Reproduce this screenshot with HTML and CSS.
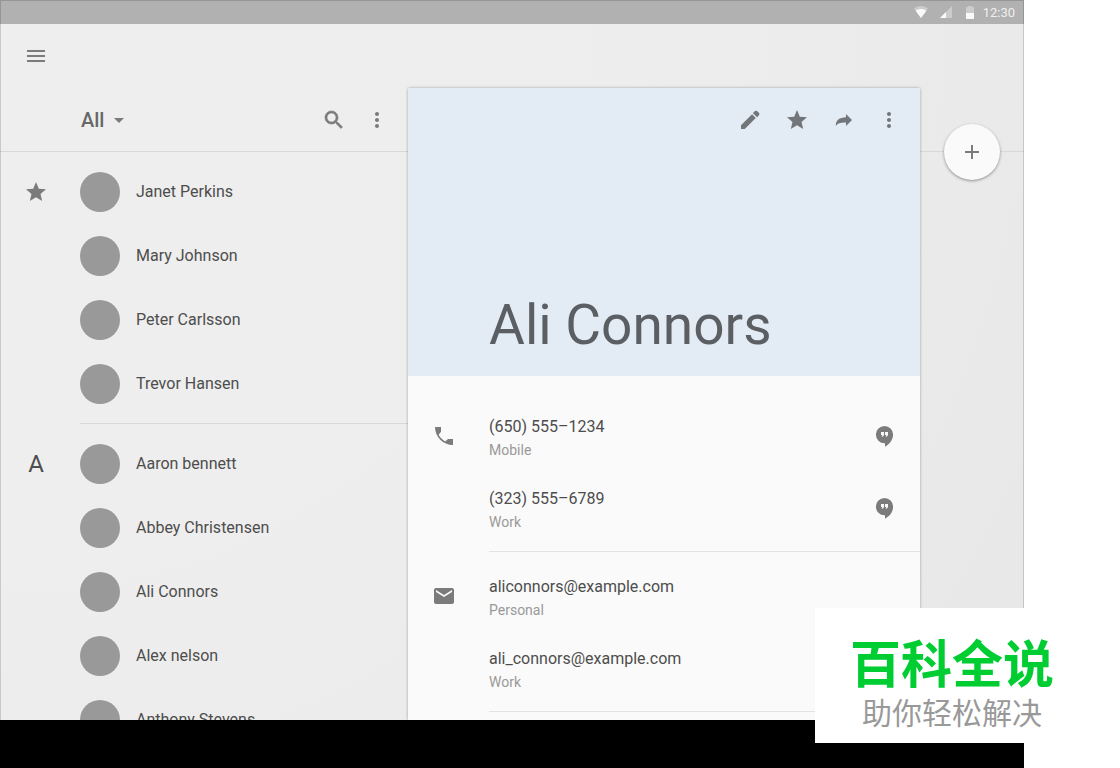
FILE: index.html
```html
<!DOCTYPE html>
<html lang="en">
<head>
    <meta charset="UTF-8">
    <meta name="viewport" content="width=device-width, initial-scale=1.0">
    <title>Contacts</title>
    <link rel="stylesheet" href="styles.css">
</head>
<body>
    <div class="tablet">
        <div class="status-bar">
            <svg class="status-icon" width="14" height="12" viewBox="0 0 14 12">
                <path d="M7 12L0 2.600C2 1 4.400 0 7 0s5 1 7 2.600z" fill="#fff" opacity="0.350"/>
                <path d="M7 12L1.600 4.700C3.200 3.600 5 3 7 3s3.800.6 5.400 1.700z" fill="#fafafa"/>
            </svg>
            <svg class="status-icon" width="12" height="12" viewBox="0 0 12 12">
                <path d="M0 12L12 0v12z" fill="#fff" opacity="0.350"/>
                <path d="M0 12l6-6v6z" fill="#fafafa"/>
            </svg>
            <svg class="status-icon" width="8" height="13" viewBox="0 0 8 13">
                <path d="M0 1h2V0h4v1h2v6H0z" fill="#fff" opacity="0.350"/>
                <path d="M0 7h8v6H0z" fill="#fafafa"/>
            </svg>
            <span class="time">12:30</span>
        </div>

        <div class="main">
            <header class="app-bar">
                <div class="app-row">
                    <button class="icon-button" aria-label="Menu">
                        <svg viewBox="0 0 24 24"><path d="M3 18h18v-2H3v2zm0-5h18v-2H3v2zm0-7v2h18V6H3z"/></svg>
                    </button>
                </div>
                <div class="app-row list-bar">
                    <div class="filter">
                        <select aria-label="Filter contacts">
                            <option>All</option>
                        </select>
                        <svg class="caret" viewBox="0 0 10 5"><path d="M0 0h10L5 5z"/></svg>
                    </div>
                    <button class="icon-button search" aria-label="Search">
                        <svg viewBox="0 0 24 24"><path d="M15.500 14h-.79l-.28-.27C15.410 12.590 16 11.110 16 9.500 16 5.910 13.090 3 9.500 3S3 5.910 3 9.500 5.910 16 9.500 16c1.610 0 3.090-.59 4.230-1.570l.27.28v.79l5 4.990L20.490 19l-4.990-5zm-6 0C7.010 14 5 11.990 5 9.500S7.010 5 9.500 5 14 7.010 14 9.500 11.990 14 9.500 14z"/></svg>
                    </button>
                    <button class="icon-button" aria-label="More">
                        <svg viewBox="0 0 24 24"><path d="M12 8c1.100 0 2-.9 2-2s-.9-2-2-2-2 .9-2 2 .9 2 2 2zm0 2c-1.100 0-2 .9-2 2s.9 2 2 2 2-.9 2-2-.9-2-2-2zm0 6c-1.100 0-2 .9-2 2s.9 2 2 2 2-.9 2-2-.9-2-2-2z"/></svg>
                    </button>
                </div>
            </header>

            <div class="contacts">
                <section class="group">
                    <div class="group-mark">
                        <svg class="icon" viewBox="0 0 24 24"><path d="M12 17.270L18.180 21l-1.640-7.030L22 9.240l-7.190-.61L12 2 9.190 8.630 2 9.240l5.460 4.730L5.820 21z"/></svg>
                    </div>
                    <ul class="people">
                        <li><a href="#"><span class="avatar"></span><span class="name">Janet Perkins</span></a></li>
                        <li><a href="#"><span class="avatar"></span><span class="name">Mary Johnson</span></a></li>
                        <li><a href="#"><span class="avatar"></span><span class="name">Peter Carlsson</span></a></li>
                        <li><a href="#"><span class="avatar"></span><span class="name">Trevor Hansen</span></a></li>
                    </ul>
                </section>
                <section class="group">
                    <div class="group-mark">A</div>
                    <ul class="people">
                        <li><a href="#"><span class="avatar"></span><span class="name">Aaron bennett</span></a></li>
                        <li><a href="#"><span class="avatar"></span><span class="name">Abbey Christensen</span></a></li>
                        <li><a href="#"><span class="avatar"></span><span class="name">Ali Connors</span></a></li>
                        <li><a href="#"><span class="avatar"></span><span class="name">Alex nelson</span></a></li>
                        <li><a href="#"><span class="avatar"></span><span class="name">Anthony Stevens</span></a></li>
                    </ul>
                </section>
            </div>

            <article class="card">
                <div class="card-header">
                    <div class="card-actions">
                        <button class="icon-button" aria-label="Edit">
                            <svg viewBox="0 0 24 24"><path d="M2 17.250V21h3.750L16.810 9.940l-3.750-3.750L2 17.250zM19.710 7.540c.9-.9.9-1.900.2-2.700l-1.700-1.700c-.8-.7-1.900-.6-2.700.2l-1.600 1.800 4.200 4.200z"/></svg>
                        </button>
                        <button class="icon-button" aria-label="Favorite">
                            <svg viewBox="0 0 24 24"><path d="M12 17.270L18.180 21l-1.640-7.030L22 9.240l-7.190-.61L12 2 9.190 8.630 2 9.240l5.460 4.730L5.820 21z"/></svg>
                        </button>
                        <button class="icon-button" aria-label="Share">
                            <svg viewBox="0 0 24 24"><path d="M15 9.300V6l6 6-6 6v-3.400c-5-.2-8.300.6-10.200 3.400C4.600 12.500 8.400 9.400 15 9.300z"/></svg>
                        </button>
                        <button class="icon-button" aria-label="More">
                            <svg viewBox="0 0 24 24"><path d="M12 8c1.100 0 2-.9 2-2s-.9-2-2-2-2 .9-2 2 .9 2 2 2zm0 2c-1.100 0-2 .9-2 2s.9 2 2 2 2-.9 2-2-.9-2-2-2zm0 6c-1.100 0-2 .9-2 2s.9 2 2 2 2-.9 2-2-.9-2-2-2z"/></svg>
                        </button>
                    </div>
                    <h1>Ali Connors</h1>
                </div>

                <div class="card-body">
                    <section class="details">
                        <div class="detail">
                            <svg class="icon" viewBox="0 0 24 24"><path d="M3 3h6v4.800L6.620 10.790c1.440 2.830 3.760 5.140 6.590 6.590L16 15h5v6c-9.900 0-18-8.100-18-18z"/></svg>
                            <div class="detail-text">
                                <p class="value">(650) 555–1234</p>
                                <p class="kind">Mobile</p>
                            </div>
                            <button class="icon-button" aria-label="Chat">
                                <svg viewBox="0 0 24 24"><path fill-rule="evenodd" d="M12.500 2a8.600 8.600 0 0 0 0 17.200h.5V22.700c4.400-2.200 8.100-6.700 8.100-12.100A8.600 8.600 0 0 0 12.500 2zM9 8h3v3l-1 1.600H9.500l.8-1.600H9zM13 8h3v3l-1 1.600h-1.500l.8-1.600H13z"/></svg>
                            </button>
                        </div>
                        <div class="detail">
                            <div class="detail-text">
                                <p class="value">(323) 555–6789</p>
                                <p class="kind">Work</p>
                            </div>
                            <button class="icon-button" aria-label="Chat">
                                <svg viewBox="0 0 24 24"><path fill-rule="evenodd" d="M12.500 2a8.600 8.600 0 0 0 0 17.200h.5V22.700c4.400-2.200 8.100-6.700 8.100-12.100A8.600 8.600 0 0 0 12.500 2zM9 8h3v3l-1 1.600H9.500l.8-1.600H9zM13 8h3v3l-1 1.600h-1.500l.8-1.600H13z"/></svg>
                            </button>
                        </div>
                    </section>
                    <section class="details">
                        <div class="detail">
                            <svg class="icon" viewBox="0 0 24 24"><path d="M20 4H4c-1.100 0-1.990.9-1.990 2L2 18c0 1.100.9 2 2 2h16c1.100 0 2-.9 2-2V6c0-1.100-.9-2-2-2zm0 4l-8 5-8-5V6l8 5 8-5v2z"/></svg>
                            <div class="detail-text">
                                <p class="value">aliconnors@example.com</p>
                                <p class="kind">Personal</p>
                            </div>
                        </div>
                        <div class="detail">
                            <div class="detail-text">
                                <p class="value">ali_connors@example.com</p>
                                <p class="kind">Work</p>
                            </div>
                        </div>
                    </section>
                </div>
            </article>

            <button class="fab" aria-label="Add contact">
                <svg viewBox="0 0 24 24"><path d="M19 13h-6v6h-2v-6H5v-2h6V5h2v6h6v2z"/></svg>
            </button>
        </div>

        <div class="nav-bar"></div>
    </div>

    <div class="badge" lang="zh">
        <p class="badge-name">百科全说</p>
        <p class="badge-tagline">助你轻松解决</p>
    </div>
</body>
</html>
```

FILE: styles.css
```css
* {
    box-sizing: border-box;
}

body {
    position: relative;
    margin: 0;
    background: #fff;
    color: #4d4d4d;
    font-family: Roboto, sans-serif;
    font-size: 16px;
}

h1, p, ul {
    margin: 0;
    padding: 0;
}

.tablet {
    position: relative;
    display: flex;
    flex-direction: column;
    height: 100vh;
    margin-right: 96px;
    background: radial-gradient(circle at 0 0, #eee 45%, #e7e7e7 100%);
}

/* thin outline around the whole screen */
.tablet::after {
    content: "";
    position: absolute;
    inset: 0;
    border: 1px solid rgba(0, 0, 0, 0.15);
    border-bottom: none;
    pointer-events: none;
}

.status-bar {
    display: flex;
    flex: none;
    align-items: center;
    justify-content: flex-end;
    height: 24px;
    padding-right: 9px;
    background: #b1b1b1;
}

.status-icon {
    margin-right: 12px;
}

.status-bar .status-icon:nth-of-type(3) {
    margin: 0 9px 0 2px;
}

.time {
    color: #efefef;
    font-size: 13px;
}

.main {
    display: grid;
    grid-template-columns: 408px 1fr 104px;
    grid-template-rows: 128px 1fr;
    flex: 1;
    min-height: 0;
    overflow: hidden;
}

.app-bar {
    grid-area: 1 / 1 / 2 / 4;
    border-bottom: 1px solid #d8d8d8;
}

.app-row {
    display: flex;
    align-items: center;
    height: 64px;
    padding-left: 24px;
}

.list-bar {
    gap: 19px;
    width: 408px;
    padding: 0 19px 0 81px;
}

.icon,
.icon-button svg,
.fab svg {
    display: block;
    flex: none;
    width: 24px;
    height: 24px;
    fill: #7b7b7b;
}

.icon-button {
    padding: 0;
    border: none;
    background: none;
    cursor: pointer;
}

.search svg {
    stroke: #7b7b7b;
    stroke-width: 0.6;
}

.filter {
    display: flex;
    flex: 1;
    align-items: center;
    gap: 9px;
}

.filter select {
    appearance: none;
    padding: 0;
    border: none;
    background: none;
    color: #676767;
    font-family: inherit;
    font-size: 20px;
    font-weight: 500;
}

.caret {
    width: 10px;
    height: 5px;
    fill: #7b7b7b;
}

.contacts {
    grid-area: 2 / 1;
    min-height: 0;
}

.group {
    display: grid;
    grid-template-columns: 80px 1fr;
}

.group-mark {
    display: flex;
    align-items: center;
    justify-content: center;
    width: 72px;
    height: 80px;
    font-size: 24px;
}

.people {
    padding: 8px 0 7px;
    border-bottom: 1px solid #d8d8d8;
    list-style: none;
}

.people a {
    display: flex;
    align-items: center;
    gap: 16px;
    height: 64px;
    color: inherit;
    text-decoration: none;
}

.avatar {
    width: 40px;
    height: 40px;
    border-radius: 50%;
    background: #999;
}

.name {
    padding-bottom: 2px;
}

.card {
    grid-area: 1 / 2 / 3 / 3;
    z-index: 1;
    min-height: 0;
    margin-top: 64px;
    border-radius: 2px 2px 0 0;
    background: #fafafa;
    box-shadow: 0 0 3px rgba(0, 0, 0, 0.35);
}

.card-header {
    display: flex;
    flex-direction: column;
    justify-content: space-between;
    height: 288px;
    padding: 20px 19px 19px 81px;
    border-radius: 2px 2px 0 0;
    background: #e3ebf5;
}

.card-actions {
    display: flex;
    justify-content: flex-end;
    gap: 22px;
}

.card-header .icon-button svg {
    fill: #72767a;
}

h1 {
    color: #5b5f63;
    font-size: 55px;
    font-weight: 400;
    line-height: 64px;
}

.card-body {
    padding-top: 16px;
}

/* the divider starts under the text, not under the icon */
.details {
    padding: 8px 0;
    background: linear-gradient(#e3e3e3, #e3e3e3) 81px 100% / 100% 1px no-repeat;
}

.detail {
    display: grid;
    grid-template-columns: 57px 1fr auto;
    align-items: center;
    height: 72px;
    padding: 0 24px;
}

.detail-text {
    grid-column: 2;
    padding-top: 5px;
}

.value {
    line-height: 24px;
}

.kind {
    color: #999;
    font-size: 14px;
    line-height: 23px;
}

.fab {
    grid-area: 1 / 3 / 3 / 4;
    z-index: 1;
    display: flex;
    align-items: center;
    justify-content: center;
    justify-self: center;
    width: 56px;
    height: 56px;
    margin-top: 100px;
    border: none;
    border-radius: 50%;
    background: #fafafa;
    box-shadow: 0 1px 3px rgba(0, 0, 0, 0.4);
    cursor: pointer;
}

.nav-bar {
    flex: none;
    height: 48px;
    background: #000;
}

.badge {
    position: absolute;
    right: 31px;
    bottom: 25px;
    z-index: 2;
    padding: 20px 35px 16px;
    background: #fff;
    font-family: "Noto Sans CJK SC", sans-serif;
    text-align: center;
    white-space: nowrap;
}

.badge-name {
    color: #00cd32;
    font-size: 51px;
    font-weight: 700;
    line-height: 67px;
}

.badge-tagline {
    color: #999;
    font-size: 30px;
    line-height: 32px;
}
```
